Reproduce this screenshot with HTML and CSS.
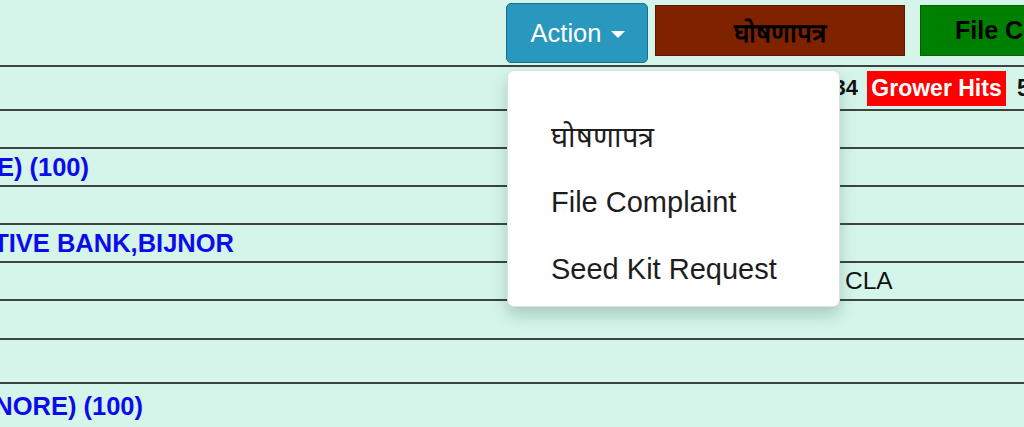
FILE: index.html
```html
<!DOCTYPE html>
<html lang="en">
<head>
<meta charset="utf-8">
<title>Grower</title>
<link rel="stylesheet" href="styles.css">
</head>
<body>
<div class="page">
  <div class="topbar">
    <button class="btn-action">Action <span class="caret"></span></button>
    <button class="btn-brown">घोषणापत्र</button>
    <button class="btn-green">File Complaint</button>
  </div>
  <div class="row row-tall">
    <div class="count">Total Growers 34</div>
    <span class="badge">Grower Hits</span>
    <div class="count2">5</div>
  </div>
  <div class="row"></div>
  <div class="row"><div class="clip clip-a">SUGAR MILL (DHAMPUR ZONE) (100)</div></div>
  <div class="row"></div>
  <div class="row"><div class="clip clip-b">DISTRICT CO-OPERATIVE BANK,BIJNOR</div></div>
  <div class="row"><div class="plain">CLA</div></div>
  <div class="row row-39"></div>
  <div class="row row-tall"></div>
  <div class="row row-last"><div class="clip clip-c">SUGAR MILL (SEOHARA KISHANPUR BIJNORE) (100)</div></div>

  <div class="menu">
    <div class="menu-item">घोषणापत्र</div>
    <div class="menu-item">File Complaint</div>
    <div class="menu-item">Seed Kit Request</div>
  </div>
</div>
</body>
</html>
```
FILE: styles.css
```css
html, body {
  margin: 0;
  padding: 0;
}
body {
  background: #d5f5ea;
  font-family: "Liberation Sans", Arial, sans-serif;
  color: #111;
  overflow: hidden;
  width: 1024px;
  height: 427px;
}
.page {
  position: relative;
  width: 1024px;
  height: 427px;
  overflow: hidden;
}
.topbar {
  box-sizing: border-box;
  height: 67px;
  border-bottom: 2px solid #3a4541;
  display: flex;
  align-items: flex-start;
  padding-left: 506px;
  white-space: nowrap;
  overflow: hidden;
}
.btn-action {
  box-sizing: border-box;
  margin-top: 3px;
  width: 142px;
  height: 60px;
  background: #2898bf;
  border: 1px solid #1b6e8a;
  border-radius: 5px;
  color: #fff;
  font-family: "Liberation Sans", Arial, sans-serif;
  font-size: 25.5px;
  padding: 0 0 0 2px;
  display: flex;
  align-items: center;
  justify-content: center;
  gap: 10px;
  flex-shrink: 0;
}
.caret {
  width: 0;
  height: 0;
  border-left: 7px solid transparent;
  border-right: 7px solid transparent;
  border-top: 7px solid #fff;
  margin-top: 2px;
}
.btn-brown, .btn-green {
  box-sizing: border-box;
  margin-top: 5px;
  height: 51px;
  font-family: "Liberation Sans", Arial, sans-serif;
  font-weight: bold;
  color: #000;
  padding: 0;
  flex-shrink: 0;
}
.btn-brown {
  margin-left: 7px;
  width: 250px;
  background: #7f2200;
  border: 1px solid #5a1800;
  font-size: 26px;
  padding-top: 2px;
}
.btn-green {
  margin-left: 15px;
  width: 250px;
  background: #008000;
  border: 1px solid #006400;
  text-align: left;
  padding-left: 34px;
  font-size: 25px;
}
.row {
  box-sizing: border-box;
  height: 38px;
  border-bottom: 2px solid #3a4541;
  display: flex;
  align-items: center;
  white-space: nowrap;
  overflow: hidden;
}
.row-tall { height: 44px; }
.row-39 { height: 39px; }
.row-last { height: 44px; border-bottom: none; }
.count {
  width: 858px;
  flex-shrink: 0;
  display: flex;
  justify-content: flex-end;
  overflow: hidden;
  font-weight: bold;
  font-size: 22px;
  color: #111;
}
.badge {
  margin-left: 9px;
  width: 139px;
  height: 35px;
  background: #ff0000;
  color: #fff;
  font-weight: bold;
  font-size: 23px;
  display: flex;
  align-items: center;
  justify-content: center;
  flex-shrink: 0;
}
.count2 {
  margin-left: 11px;
  font-weight: bold;
  font-size: 23px;
  flex-shrink: 0;
}
.clip {
  display: flex;
  justify-content: flex-end;
  overflow: hidden;
  font-weight: bold;
  font-size: 25.5px;
  color: #0c0ceb;
  flex-shrink: 0;
}
.clip-a { width: 89px; }
.clip-b { width: 234px; }
.clip-c { width: 143px; }
.plain {
  padding-left: 845px;
  font-size: 24.5px;
  color: #111;
}
.menu {
  position: absolute;
  left: 507px;
  top: 70px;
  width: 333px;
  height: 237px;
  box-sizing: border-box;
  background: #fff;
  border: 1px solid rgba(0,0,0,0.12);
  border-radius: 7px;
  box-shadow: 0 8px 16px rgba(0,60,40,0.22);
  padding-top: 31px;
}
.menu-item {
  height: 67px;
  display: flex;
  align-items: center;
  padding-left: 43px;
  font-size: 29px;
  color: #1d1d1d;
  white-space: nowrap;
}
```
